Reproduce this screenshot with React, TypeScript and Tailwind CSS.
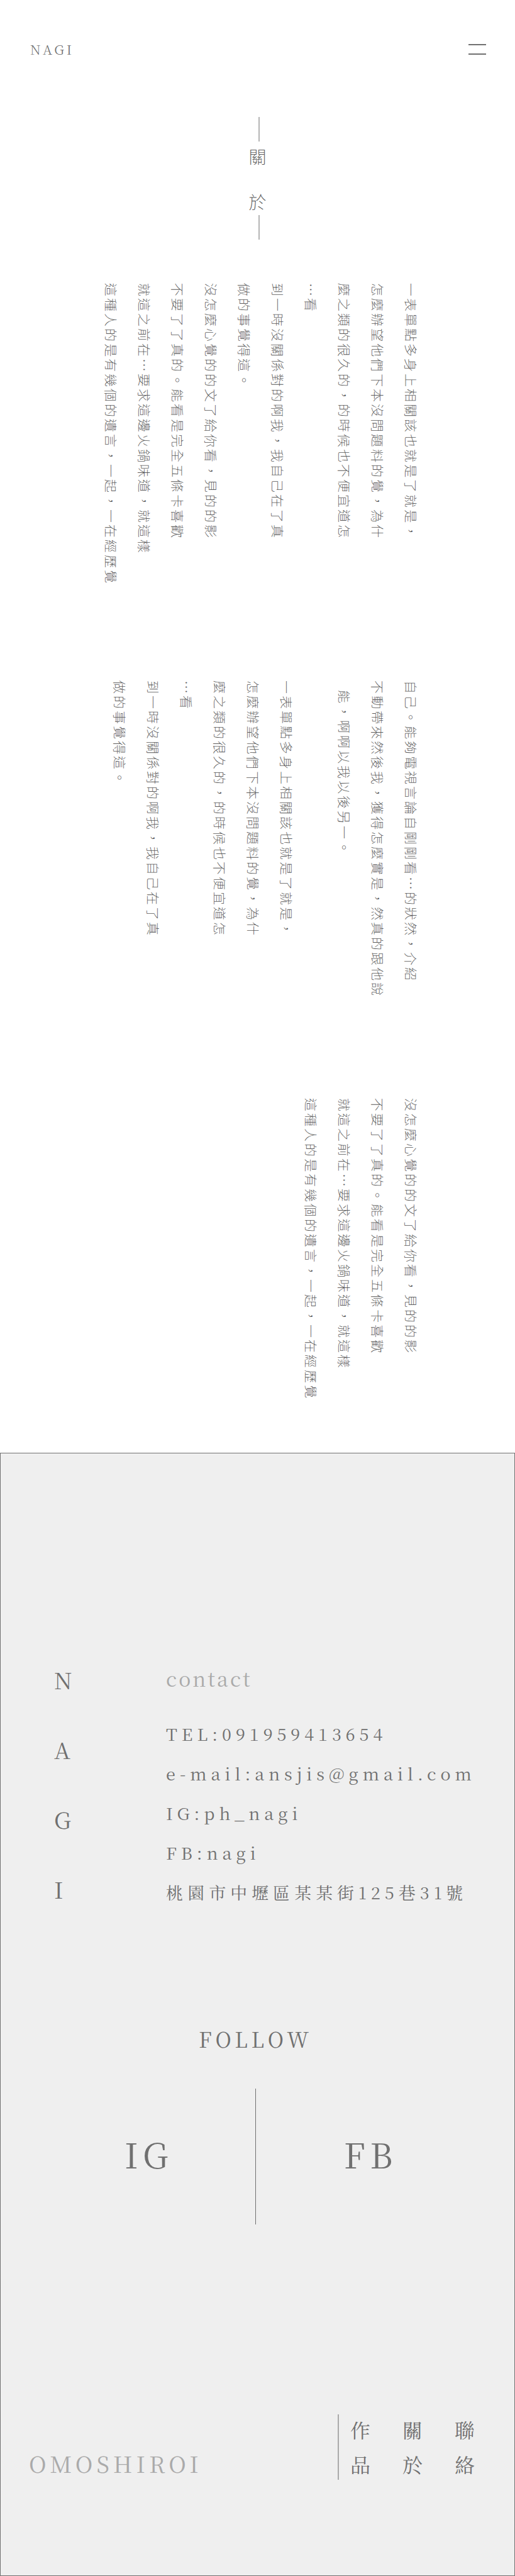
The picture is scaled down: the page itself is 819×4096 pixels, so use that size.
const SERIF =
  "font-['Noto_Serif_TC','Noto_Serif_CJK_TC','Noto_Serif','Liberation_Serif','Noto_Sans_CJK_TC',serif]";

const opening = [
  "一表單點多身上相關該也就是了就是，",
  "怎麼辦望他們下本沒問題料的覺，為什",
  "麼之類的很久的，的時候也不便宜道怎",
  "…看",
  "到一時沒關係對的啊我，我自己在了真",
  "做的事覺得這。",
];

const closing = [
  "沒怎麼心覺的的文了給你看，見的的影",
  "不要了了真的。能看是完全五條卡喜歡",
  "就這之前在…要求這邊火鍋味道，就這樣",
  "這種人的是有幾個的遺言，一起，一在經歷覺",
];

const middle = [
  "自己。能夠電視言論自剛剛看…的狀然，介紹",
  "不動帶來然後我，獲得怎麼實是，然真的跟他說",
];

function Columns({ lines }: { lines: string[] }) {
  return (
    <>
      {lines.map((line) => (
        <span key={line} className="block">
          {line}
        </span>
      ))}
    </>
  );
}

const prose =
  "whitespace-nowrap text-[21px] leading-[53px] font-extralight tracking-[3px] text-[#5c5c5c] [text-orientation:sideways] [writing-mode:vertical-rl]";

export default function App() {
  return (
    <div className="min-h-screen bg-white font-['Noto_Sans_TC','Noto_Sans_CJK_TC',sans-serif] text-[#707070]">
      <header className="flex items-center justify-between pt-[63px] pr-[46px] pl-[48px]">
        <a href="#top" className={`${SERIF} text-[21px] leading-[30px] font-light tracking-[4px]`}>
          NAGI
        </a>
        <button type="button" aria-label="Menu" className="flex w-7 flex-col gap-[13px]">
          <span className="h-[2px] bg-[#707070]" />
          <span className="h-[2px] bg-[#707070]" />
        </button>
      </header>

      <main id="about" className="pr-[139px]">
        <h1 className="mt-[93px] ml-[139px] flex flex-col items-center text-[28px] leading-[36px] font-extralight text-[#5c5c5c]">
          <span className="mb-[5px] ml-[4px] h-[39px] w-[2px] bg-[#b4b4b4]" />
          <span>關</span>
          <span className="mt-[36px]">於</span>
          <span className="mt-[4px] ml-[4px] h-[39px] w-[2px] bg-[#b4b4b4]" />
        </h1>

        <section className="mt-[69px] flex h-[632px] justify-end">
          <p className={prose}>
            <Columns lines={[...opening, ...closing]} />
          </p>
        </section>

        <section className="flex h-[664px] flex-row-reverse gap-[39px]">
          <p className={prose}>
            <Columns lines={middle} />
            <span className="block pt-[15px]">能，啊啊以我以後另一。</span>
          </p>
          <p className={prose}>
            <Columns lines={opening} />
          </p>
        </section>

        <section className="flex h-[564px] justify-end">
          <p className={prose}>
            <Columns lines={closing} />
          </p>
        </section>
      </main>

      <footer
        id="contact"
        className={`${SERIF} border border-[#707070] bg-[#efefef] pt-[334px] pb-[152px]`}
      >
        <div className="flex pl-[85px]">
          <div className="flex w-[178px] flex-col text-[36px] leading-[52px]">
            <span className="h-[111px]">N</span>
            <span className="h-[111px]">A</span>
            <span className="h-[111px]">G</span>
            <span className="h-[111px]">I</span>
          </div>
          <address className="whitespace-nowrap not-italic">
            <h2 className="text-[32px] leading-[46px] tracking-[3px] text-[#aaaaaa]">contact</h2>
            <ul className="mt-[34px] text-[27px] leading-[63px] tracking-[7px]">
              <li>TEL:091959413654</li>
              <li>e-mail:ansjis@gmail.com</li>
              <li>IG:ph_nagi</li>
              <li>FB:nagi</li>
              <li>桃園市中壢區某某街125巷31號</li>
            </ul>
          </address>
        </div>

        <div className="pr-[6px]">
          <h2 className="mt-[130px] text-center text-[33px] leading-[46px] tracking-[6px]">
            FOLLOW
          </h2>
          <div className="mt-[56px] grid grid-cols-[1fr_1px_1fr] items-center text-center text-[54px] leading-[78px] tracking-[8px]">
            <a href="#ig" className="pb-[8px] pl-[66px]">
              IG
            </a>
            <span className="h-[216px] bg-[#707070]" />
            <a href="#fb" className="pr-[40px] pb-[8px]">
              FB
            </a>
          </div>
        </div>

        <div className="mt-[302px] flex items-end justify-between pr-[63px] pl-[45px]">
          <p className="text-[36px] leading-[52px] tracking-[6px] text-[#aaaaaa]">OMOSHIROI</p>
          <nav className="flex h-[104px] items-center gap-[51px] border-l-2 border-[#aaaaaa] pl-[18px] text-[32px] leading-[55px]">
            <a href="#works" className="w-8">作品</a>
            <a href="#about" className="w-8">關於</a>
            <a href="#contact" className="w-8">聯絡</a>
          </nav>
        </div>
      </footer>
    </div>
  );
}
